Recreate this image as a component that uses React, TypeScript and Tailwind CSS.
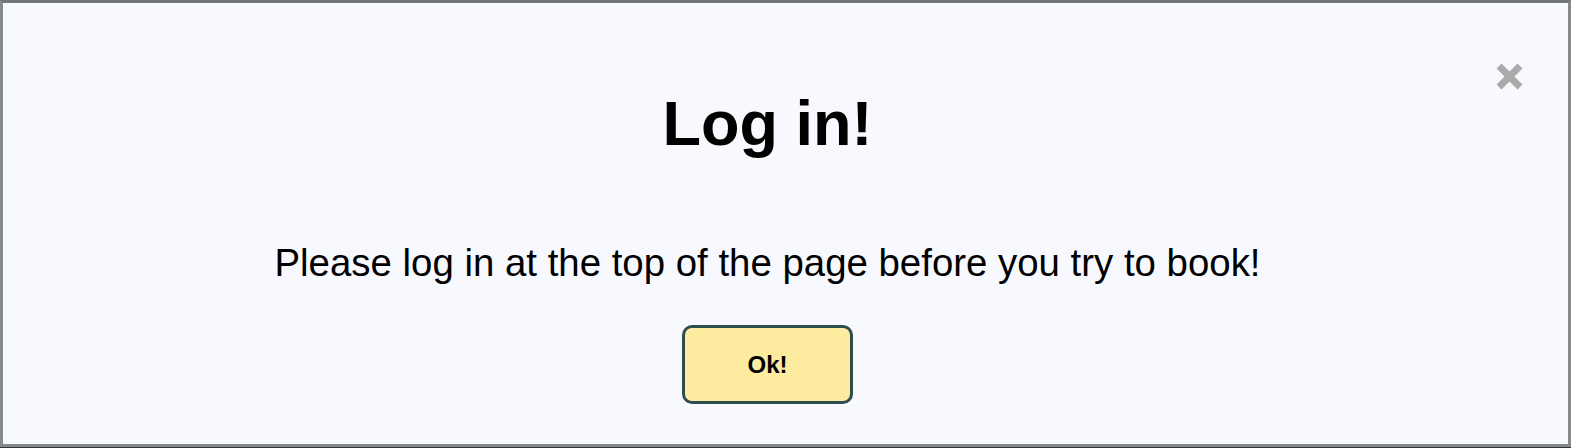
export default function App() {
  return (
    <div className="w-full h-[448px] bg-[#2f3434] font-['Liberation_Sans',Arial,sans-serif]">
      <div className="relative h-[447px] border-[3px] border-[#868989] border-t-[#70767a] bg-[#f8f8ff]">
        {/* close button */}
        <button className="absolute top-[60px] right-[45px] w-[27px] h-[27px]" aria-label="close">
          <svg viewBox="0 0 27 27" className="w-[27px] h-[27px]">
            <path d="M3 3 L24 24 M24 3 L3 24" stroke="#aaaaaa" strokeWidth="7" strokeLinecap="butt" />
          </svg>
        </button>

        <div className="flex flex-col items-center pt-[89px] pr-[36px]">
          <h1 className="text-[63px] leading-none font-bold text-black">Log in!</h1>
          <p className="mt-[89px] text-[38.4px] leading-none text-black">
            Please log in at the top of the page before you try to book!
          </p>
          <button className="mt-[43px] w-[171px] h-[79px] rounded-[10px] border-[3px] border-[#2f4f4f] bg-[#fdeca0] text-[24px] font-bold text-black">
            Ok!
          </button>
        </div>
      </div>
    </div>
  );
}
